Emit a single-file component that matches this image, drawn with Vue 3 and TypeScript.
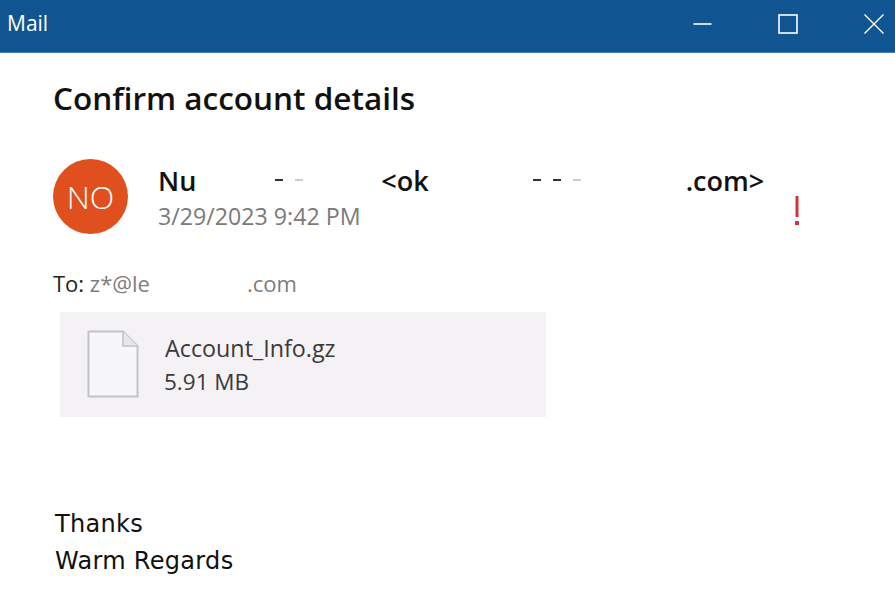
<script setup lang="ts">
const title = 'Confirm account details'
</script>

<template>
  <div class="window">
    <header class="titlebar">
      <span class="app">Mail</span>
      <div class="controls">
        <svg width="20" height="20" viewBox="0 0 20 20"><path d="M1.5 10H19.5" stroke="#fff" stroke-width="1.6" /></svg>
        <svg width="20" height="20" viewBox="0 0 20 20"><rect x="1" y="1" width="18" height="18" fill="none" stroke="#fff" stroke-width="1.6" /></svg>
        <svg width="20" height="20" viewBox="0 0 20 20"><path d="M0.5 0.5L19.5 19.5M19.5 0.5L0.5 19.5" stroke="#fff" stroke-width="1.4" /></svg>
      </div>
    </header>
    <main class="content">
      <h1>{{ title }}</h1>
      <section class="sender">
        <div class="avatar">NO</div>
        <div class="meta">
          <div class="from">
            <span class="name">Nu</span>
            <span class="smudges s1"><i class="dark"></i><i></i></span>
            <span class="addr">&lt;ok</span>
            <span class="smudges s2"><i class="dark"></i><i class="dark"></i><i></i></span>
            <span class="tld">.com&gt;</span>
          </div>
          <div class="date">3/29/2023 9:42 PM</div>
        </div>
        <svg class="flag" width="6" height="32" viewBox="0 0 6 32"><path d="M3 1V22" stroke="#d13438" stroke-width="3" /><rect x="1" y="26" width="4" height="4" fill="#d13438" /></svg>
      </section>
      <div class="to"><span class="label">To:</span> <span class="rcpt">z*@le</span><span class="rcpt domain">.com</span></div>
      <div class="attachment">
        <svg class="file" width="52" height="68" viewBox="0 0 52 68">
          <path d="M1.5 1.5H36L50.5 16V66.5H1.5Z" fill="#f7f7fb" stroke="#c4c4c4" stroke-width="2" />
          <path d="M36 1.5V16H50.5" fill="#e8e8ec" stroke="#c4c4c4" stroke-width="1.6" />
        </svg>
        <div class="fileinfo">
          <div class="fname">Account_Info.gz</div>
          <div class="fsize">5.91 MB</div>
        </div>
      </div>
      <div class="body">
        <div>Thanks</div>
        <div>Warm Regards</div>
      </div>
    </main>
  </div>
</template>

<style>
html, body { margin: 0; background: #fff; }
</style>

<style scoped>
.window {
  width: 895px;
  height: 589px;
  overflow: hidden;
  background: #fff;
  font-family: "Open Sans", "Noto Sans", sans-serif;
  display: flex;
  flex-direction: column;
}
.titlebar {
  height: 53px;
  box-sizing: border-box;
  background: #105592;
  border-bottom: 1px solid #3f7fb5;
  display: flex;
  align-items: center;
  justify-content: space-between;
  padding: 0 11px 7px 7px;
  color: #fff;
}
.app { font-size: 21px; }
.controls { display: flex; gap: 66px; margin-top: 3px; }
.controls svg { display: block; }
.content { padding: 0 0 0 53px; display: flex; flex-direction: column; }
h1 {
  margin: 25px 0 0;
  font-size: 31.5px;
  line-height: 40px;
  font-weight: 600;
  color: #111;
}
.sender { display: flex; align-items: flex-start; margin-top: 41px; }
.avatar {
  width: 75px;
  height: 75px;
  border-radius: 50%;
  background: #e04f1e;
  color: #fff;
  font-size: 32px;
  font-weight: 300;
  display: flex;
  align-items: center;
  justify-content: center;
}
.meta { margin-left: 30px; width: 630px; }
.from {
  display: flex;
  align-items: center;
  height: 38px;
  margin-top: 2px;
  font-size: 27px;
  font-weight: 600;
  color: #111;
}
.smudges { display: flex; gap: 12px; align-items: center; }
.smudges i { display: block; width: 8px; height: 2px; background: #ccc; }
.smudges i.dark { background: #333; }
.s1 { width: 185px; justify-content: center; }
.s2 { width: 257px; justify-content: center; }
.date { font-size: 23.2px; line-height: 28px; margin-top: 3px; color: #7a7a7a; }
.flag { margin-top: 36px; margin-left: 6px; }
.to { margin-top: 34px; font-size: 22px; line-height: 30px; }
.label { color: #222; }
.rcpt { color: #7d7d7d; }
.domain { margin-left: 97px; }
.attachment {
  margin: 14px 0 0 7px;
  width: 486px;
  height: 105px;
  background: #f4f2f4;
  display: flex;
  align-items: center;
}
.file { margin-left: 27px; margin-top: -2px; flex: none; }
.fileinfo { margin-left: 26px; color: #3a3a3a; line-height: 34px; margin-top: 1px; }
.fname { font-size: 23.3px; }
.fsize { font-size: 22.5px; margin-left: -1px; }
.body {
  margin-top: 89px;
  margin-left: 2px;
  font-family: "DejaVu Sans", sans-serif;
  font-size: 24px;
  line-height: 37px;
  color: #111;
  letter-spacing: 0.3px;
}
</style>
